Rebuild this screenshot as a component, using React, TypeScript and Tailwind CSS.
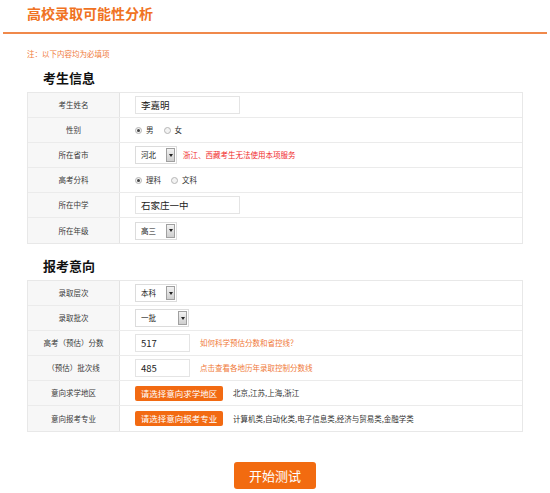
import React from 'react';

const FONT = '"Microsoft YaHei", "Noto Sans CJK SC", "Noto Sans", sans-serif';

function Row({ label, children }: { label: string; children: React.ReactNode }) {
  return (
    <div className="flex h-[25px] border-b border-[#ebebeb] last:border-b-0">
      <div className="flex w-[92px] shrink-0 items-center justify-center border-r border-[#e3e3e3] bg-[#f7f7f7] text-[7.5px] text-[#3a3a3a]">
        {label}
      </div>
      <div className="flex flex-1 items-center gap-[6px] pl-[15px] text-[7.5px]">{children}</div>
    </div>
  );
}

function TextBox({ value, width }: { value: string; width: number }) {
  return (
    <div
      className="flex h-[18px] items-center border border-[#e4e4e4] bg-white pl-[5px] text-[9.5px] text-[#222]"
      style={{ width }}
    >
      {value}
    </div>
  );
}

function Select({ value, width }: { value: string; width: number }) {
  return (
    <div
      className="flex h-[18px] items-stretch border border-[#dcdcdc] bg-white text-[7.5px] text-[#222]"
      style={{ width }}
    >
      <div className="flex flex-1 items-center pl-[5px]">{value}</div>
      <div className="my-[1px] mr-[1px] flex w-[9px] items-center justify-center border border-[#a0a0a0] bg-gradient-to-b from-[#f2f2f2] to-[#cfcfcf]">
        <div className="h-0 w-0 border-x-[2px] border-t-[3px] border-x-transparent border-t-[#222]" />
      </div>
    </div>
  );
}

function Radio({ checked, label }: { checked?: boolean; label: string }) {
  return (
    <span className="mr-[4px] flex items-center gap-[4px] text-[7.5px] text-[#333]">
      <span className="flex h-[7px] w-[7px] items-center justify-center rounded-full border border-[#b5b5b5] bg-[#f3f3f3]">
        {checked && <span className="h-[3px] w-[3px] rounded-full bg-[#444]" />}
      </span>
      {label}
    </span>
  );
}

function OrangeBtn({ text }: { text: string }) {
  return (
    <span className="flex h-[15px] w-[88px] items-center justify-center whitespace-nowrap rounded-[2px] bg-[#f26a12] text-[8.5px] text-white">
      {text}
    </span>
  );
}

export default function App() {
  return (
    <div className="h-[493px] w-[550px] bg-white" style={{ fontFamily: FONT }}>
      <div className="pl-[27px] pt-[4px] text-[14px] font-bold leading-[19px] text-[#f07222]">
        高校录取可能性分析
      </div>
      <div className="mx-[3px] mt-[9px] h-[2px] bg-[#f0894b]" />
      <div className="mt-[15px] pl-[27px] text-[7.5px] leading-[10px] text-[#f07a3a]">注：以下内容均为必填项</div>
      <div className="mt-[10px] pl-[43px] text-[13px] font-bold leading-[18px] text-[#111]">考生信息</div>
      <div className="ml-[27px] mt-[5px] w-[496px] border border-[#e8e8e8]">
        <Row label="考生姓名">
          <TextBox value="李嘉明" width={105} />
        </Row>
        <Row label="性别">
          <Radio checked label="男" />
          <Radio label="女" />
        </Row>
        <Row label="所在省市">
          <Select value="河北" width={42} />
          <span className="text-[#f02a2a]">浙江、西藏考生无法使用本项服务</span>
        </Row>
        <Row label="高考分科">
          <Radio checked label="理科" />
          <Radio label="文科" />
        </Row>
        <Row label="所在中学">
          <TextBox value="石家庄一中" width={105} />
        </Row>
        <Row label="所在年级">
          <Select value="高三" width={42} />
        </Row>
      </div>
      <div className="mt-[13px] pl-[43px] text-[13px] font-bold leading-[18px] text-[#111]">报考意向</div>
      <div className="ml-[27px] mt-[5px] w-[496px] border border-[#e8e8e8]">
        <Row label="录取层次">
          <Select value="本科" width={42} />
        </Row>
        <Row label="录取批次">
          <Select value="一批" width={54} />
        </Row>
        <Row label="高考（预估）分数">
          <TextBox value="517" width={55} />
          <span className="ml-[4px] text-[#f07a3a]">如何科学预估分数和省控线？</span>
        </Row>
        <Row label="（预估）批次线">
          <TextBox value="485" width={55} />
          <span className="ml-[4px] text-[#f07a3a]">点击查看各地历年录取控制分数线</span>
        </Row>
        <Row label="意向求学地区">
          <OrangeBtn text="请选择意向求学地区" />
          <span className="ml-[4px] text-[#333]">北京,江苏,上海,浙江</span>
        </Row>
        <Row label="意向报考专业">
          <OrangeBtn text="请选择意向报考专业" />
          <span className="ml-[4px] text-[#333]">计算机类,自动化类,电子信息类,经济与贸易类,金融学类</span>
        </Row>
      </div>
      <div className="mt-[30px] flex justify-center">
        <button
          type="button"
          className="flex h-[27px] w-[82px] items-center justify-center rounded-[3px] bg-[#f26b10] text-[13px] text-white"
        >
          开始测试
        </button>
      </div>
    </div>
  );
}
